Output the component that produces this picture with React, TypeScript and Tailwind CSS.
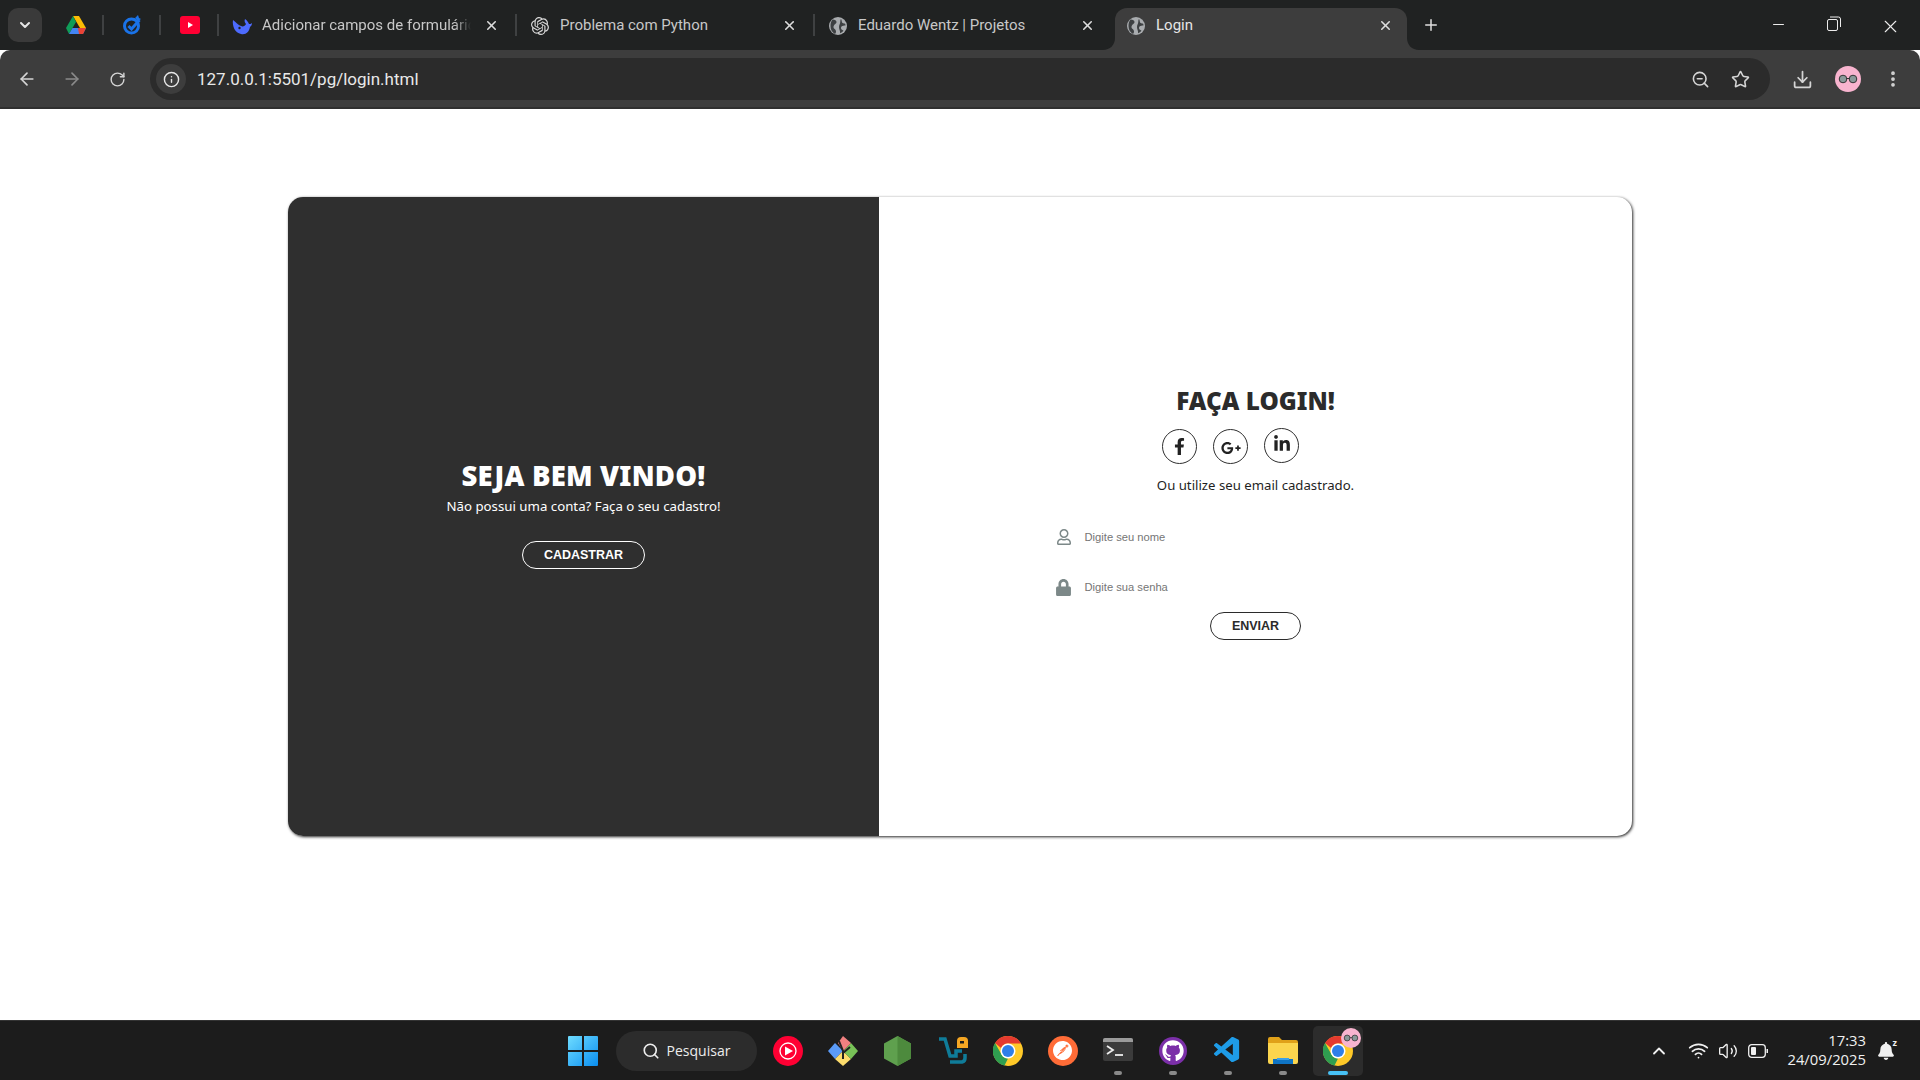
import React from "react";
import { ArrowLeft, ArrowRight, RotateCw, Info, Star, Download, EllipsisVertical, X, Plus, Minus, Search, ChevronDown, ChevronUp, ZoomOut, Wifi, Volume2 } from "lucide-react";
import { FaFacebookF, FaGooglePlusG, FaLinkedinIn, FaRegUser, FaLock, FaGithub, FaBell } from "react-icons/fa";
import { SiOpenai, SiPostman } from "react-icons/si";
import { VscVscode } from "react-icons/vsc";

const Sep = () => <span className="h-[20px] w-[2px] shrink-0 bg-[#3f4142]" />;

const Globe = () => (
  <svg width="18" height="18" viewBox="0 0 18 18" className="shrink-0">
    <circle cx="9" cy="9" r="9" fill="#a9acaf" />
    <path d="M3.500 2.500 C6 2.500 7.500 3.500 7.500 5 C7.500 7 4.500 7.500 4.500 10 C4.500 12 7 12 7 14.500 C7 15.500 6.500 16.500 6 17 C3 15.500 1.500 12.500 1.500 9 C1.500 6.500 2 4.500 3.500 2.500Z" fill="#3d4042" />
    <path d="M12 2 C13 3.500 12.500 5 13.500 6 C14.500 6.800 15.500 6 16.300 7 L16.500 8.500 C15 8.500 13.500 8.500 12.500 9.500 C11.500 10.500 12 12.500 13.500 13 L14.500 13.800 C13.500 15 12.500 15.800 11 16.200 C11.500 14 10 12.500 10 10 C10 7.500 11.300 7 11.300 4.500 C11.300 3.500 11.500 2.500 12 2Z" fill="#3d4042" />
  </svg>
);

const Drive = () => (
  <svg width="20" height="18" viewBox="0 0 20 18">
    <path d="M7 0h6l7 12h-6z" fill="#fbbc04" />
    <path d="M7 0 0 12l3 6 7-12z" fill="#0f9d58" />
    <path d="M3 18h14l3-6H6.500z" fill="#4285f4" />
    <path d="M13 18l-1-6h8l-3 6z" fill="#ea4335" />
  </svg>
);

const Target = () => (
  <svg width="18" height="20" viewBox="0 0 18 20">
    <circle cx="8.500" cy="11" r="7" fill="none" stroke="#1a73e8" strokeWidth="3" />
    <path d="M5.500 11l3 3 8-9" fill="none" stroke="#1a73e8" strokeWidth="3" />
    <path d="M12 3l3-3 1 3 2 1-3 2z" fill="#1a73e8" />
  </svg>
);

const YouTube = () => (
  <svg width="20" height="18" viewBox="0 0 20 18">
    <rect width="20" height="18" y="0" rx="3" fill="#ff0033" />
    <path d="M8 6l5 3-5 3z" fill="#fff" />
  </svg>
);

const Whale = () => (
  <svg width="20" height="18" viewBox="0 0 20 18" className="shrink-0">
    <path d="M1 3c-1 6 2 13 8 14 5 1 8-2 9-7 1-1 2-2 2-4-1 1-2 1-3 1-1-2-2-4-4-5-1 2 0 4 1 5-1 2-3 3-5 2C6 8 4 5 1 3Z" fill="#4d6bfe" />
    <circle cx="7.500" cy="11" r="1.200" fill="#202222" />
  </svg>
);

const Chrome = ({ size = 30 }: { size?: number }) => (
  <svg width={size} height={size} viewBox="0 0 30 30">
    <circle cx="15" cy="15" r="15" fill="#ffc928" />
    <path d="M15 0a15 15 0 0 1 13 7.500H15a7.500 7.500 0 0 0-7 4.500L2 7a15 15 0 0 1 13-7Z" fill="#e53a2f" />
    <path d="M2 7l6.500 11.500a7.500 7.500 0 0 0 6.500 4l-3.500 7A15 15 0 0 1 2 7Z" fill="#2f9e50" />
    <circle cx="15" cy="15" r="7.500" fill="#fff" />
    <circle cx="15" cy="15" r="6" fill="#2f7fe8" />
  </svg>
);

const Avatar = ({ size = 26 }: { size?: number }) => (
  <svg width={size} height={size} viewBox="0 0 26 26">
    <circle cx="13" cy="13" r="13" fill="#f8b4cf" />
    <circle cx="8" cy="13" r="3.800" fill="#8a9899" stroke="#333" />
    <circle cx="18" cy="13" r="3.800" fill="#8a9899" stroke="#333" />
    <path d="M11.500 12.500h3" stroke="#333" />
  </svg>
);

const Tab = ({ icon, title, active, fade }: { icon: React.ReactNode; title: string; active?: boolean; fade?: boolean }) => (
  <div className="relative flex h-[42px] w-[298px] shrink-0 items-center">
    {active ? (
      <>
        <div className="absolute inset-y-0 left-[3px] right-[3px] rounded-t-[12px] bg-[#3d3d3d]" />
        <svg width="12" height="12" viewBox="0 0 12 12" className="absolute bottom-0 -left-[9px] text-[#3d3d3d]">
          <path d="M12 0v12H0c7 0 12-5 12-12Z" fill="currentColor" />
        </svg>
        <svg width="12" height="12" viewBox="0 0 12 12" className="absolute bottom-0 -right-[9px] text-[#3d3d3d]">
          <path d="M0 0v12h12C5 12 0 7 0 0Z" fill="currentColor" />
        </svg>
      </>
    ) : (
      <span className="absolute -left-[1px] top-[6px] h-[22px] w-[2px] bg-[#3f4142]" />
    )}
    <div className="relative flex h-[34px] w-full items-center self-start pt-[1px] pl-[14px] pr-[16px]">
      <span className="flex w-[20px] shrink-0 justify-center">{icon}</span>
      <span className={`ml-[10px] w-[209px] shrink-0 overflow-hidden font-['Roboto',sans-serif] text-[15px] whitespace-nowrap ${fade ? "[mask-image:linear-gradient(to_right,black_92%,transparent)]" : ""} ${active ? "text-[#e6e6e6]" : "text-[#c8c8c8]"}`}>{title}</span>
      <X size={15} strokeWidth={2.500} className="ml-[13px] shrink-0 text-[#dddddd]" />
    </div>
  </div>
);

const Field = ({ icon, label }: { icon: React.ReactNode; label: string }) => (
  <div className="flex h-[30px] w-[410px] items-center pl-[4px]">
    <span className="flex w-[18px] shrink-0 justify-center text-[#7c8888]">{icon}</span>
    <span className="ml-[12px] font-['Liberation_Sans',sans-serif] text-[11.200px] text-[#757575]">{label}</span>
  </div>
);

const Social = ({ children, className = "" }: { children: React.ReactNode; className?: string }) => (
  <span className={`flex h-[35px] w-[35px] items-center justify-center rounded-full border border-[#2f2f2f] text-[#222] ${className}`}>{children}</span>
);

const Slot = ({ children, active, dot }: { children: React.ReactNode; active?: boolean; dot?: boolean }) => (
  <div className={`relative flex h-[50px] w-[50px] items-center justify-center rounded-[5px] ${active ? "bg-[#2c2c2c]" : ""}`}>
    {children}
    {dot && <span className="absolute bottom-[1px] left-[21px] h-[4px] w-[8px] rounded-full bg-[#8a8a8a]" />}
    {active && <span className="absolute bottom-[1px] left-[15px] h-[4px] w-[20px] rounded-full bg-[#47c1f5]" />}
  </div>
);

export default function App() {
  return (
    <div className="flex h-screen w-full flex-col overflow-hidden bg-white font-['Noto_Sans',sans-serif]">
      {/* tab strip */}
      <div className="flex h-[50px] shrink-0 items-end bg-[#202222]">
        <div className="flex h-full w-[47px] shrink-0 items-start pl-[8px] pt-[8px]">
          <span className="flex h-[34px] w-[34px] items-center justify-center rounded-[10px] bg-[#3a3a3a] text-[#e6e6e6]">
            <ChevronDown size={16} strokeWidth={3} />
          </span>
        </div>
        {[<Drive key="d" />, <Target key="t" />, <YouTube key="y" />].map((icon, i) => (
          <div key={i} className="flex h-full w-[57px] shrink-0 items-center justify-between pb-[1px] pl-[19px]">
            {icon}
            {i < 2 && <Sep />}
          </div>
        ))}
        <Tab icon={<Whale />} title="Adicionar campos de formulário" fade />
        <Tab icon={<SiOpenai size={18} className="text-[#d8d8d8]" />} title="Problema com Python" />
        <Tab icon={<Globe />} title="Eduardo Wentz | Projetos" />
        <Tab icon={<Globe />} title="Login" active />
        <Plus size={18} strokeWidth={2} className="mb-[16px] ml-[12px] shrink-0 text-[#e0e0e0]" />
        <div className="flex h-full flex-1 items-start justify-end pt-[16px] text-[#ececec]">
          <span className="flex w-[56px] justify-center"><Minus size={17} strokeWidth={1.500} /></span>
          <span className="flex w-[56px] justify-center">
            <svg width="14" height="15" viewBox="0 0 14 15" fill="none" stroke="currentColor"><rect x=".5" y="3.500" width="10" height="11" rx="1.500" /><path d="M3 1h8.500a2 2 0 0 1 2 2v8" /></svg>
          </span>
          <span className="flex w-[58px] justify-center pr-[2px]"><X size={21} strokeWidth={1.300} /></span>
        </div>
      </div>

      {/* toolbar */}
      <div className="flex h-[59px] shrink-0 flex-col">
        <div className="flex h-[57px] items-center rounded-t-[10px] bg-[#3d3d3d] pl-[17px] pr-[18px] pb-[7px] pt-[8px] text-[#d5d5d5]">
          <ArrowLeft size={20} strokeWidth={2} className="shrink-0" />
          <ArrowRight size={20} strokeWidth={2} className="ml-[25px] shrink-0 text-[#8a8a8a]" />
          <RotateCw size={17} strokeWidth={2} className="ml-[27px] shrink-0" />
          <div className="ml-[24px] flex h-[42px] w-[1620px] shrink-0 items-center rounded-full bg-[#2b2b2b] pl-[6px] pr-[20px]">
            <span className="flex h-[30px] w-[30px] items-center justify-center rounded-full bg-[#3d3d3d]"><Info size={17} className="text-[#e8e8e8]" /></span>
            <span className="ml-[11px] pt-[2px] font-['Roboto',sans-serif] text-[17px] text-[#e8e8e8]">127.0.0.1:5501/pg/login.html</span>
            <span className="flex-1" />
            <ZoomOut size={19} strokeWidth={2} />
            <Star size={19} strokeWidth={2} className="ml-[21px]" />
          </div>
          <Download size={21} strokeWidth={2} className="ml-[22px] shrink-0" />
          <span className="ml-[22px] shrink-0"><Avatar /></span>
          <EllipsisVertical size={20} strokeWidth={2.500} className="ml-[22px] shrink-0" />
        </div>
        <div className="h-[2px] bg-[#2f2f2f]" />
      </div>

      {/* page */}
      <main className="flex flex-1 items-start justify-center pt-[88px]">
        <div className="flex h-[639px] w-[1344px] overflow-hidden rounded-[15px] bg-white shadow-[1px_1px_3px_rgba(0,0,0,0.85)]">
          <section className="flex w-[591px] shrink-0 flex-col items-center bg-[#2f2f2f] pt-[262px] text-white">
            <h1 className="text-[27.500px] leading-[34px] font-black tracking-[0.2px] whitespace-nowrap">SEJA BEM VINDO!</h1>
            <p className="mt-[3px] text-[13.250px] leading-[20px] whitespace-nowrap">Não possui uma conta? Faça o seu cadastro!</p>
            <button className="mt-[25px] flex h-[28px] w-[123px] items-center justify-center rounded-full border border-white font-['Liberation_Sans',sans-serif] text-[12.500px] font-bold">CADASTRAR</button>
          </section>
          <section className="flex flex-1 flex-col items-center pt-[187px]">
            <h1 className="text-[24.300px] leading-[34px] font-black whitespace-nowrap text-[#2b2b2b]">FAÇA LOGIN!</h1>
            <div className="mt-[11px] mr-[50px] flex gap-[16px]">
              <Social><FaFacebookF size={17} /></Social>
              <Social><FaGooglePlusG size={20} className="mt-[2px]" /></Social>
              <Social className="-mt-[1px]"><FaLinkedinIn size={18} className="-mt-[4px]" /></Social>
            </div>
            <p className="mt-[11px] text-[13.200px] leading-[20px] whitespace-nowrap text-[#1f1f1f]">Ou utilize seu email cadastrado.</p>
            <div className="mt-[27px] flex flex-col gap-[20px]">
              <Field icon={<FaRegUser size={16} />} label="Digite seu nome" />
              <Field icon={<FaLock size={17} />} label="Digite sua senha" />
            </div>
            <button className="mt-[10px] flex h-[28px] w-[91px] items-center justify-center rounded-full border border-[#2b2b2b] font-['Liberation_Sans',sans-serif] text-[12.500px] font-bold text-[#2b2b2b]">ENVIAR</button>
          </section>
        </div>
      </main>

      {/* taskbar */}
      <footer className="grid h-[60px] shrink-0 grid-cols-[1fr_auto_1fr] items-center border-t border-[#333] bg-[#1c1c1c]">
        <span />
        <div className="flex items-center gap-[5px]">
          <Slot>
            <svg width="30" height="30" viewBox="0 0 30 30">
              <defs><linearGradient id="w" x1="0" y1="0" x2="1" y2="1"><stop stopColor="#6fdcff" /><stop offset="1" stopColor="#0a8ef0" /></linearGradient></defs>
              <path d="M0 1a1 1 0 0 1 1-1h13v14H0zM16 0h13a1 1 0 0 1 1 1v13H16zM0 16h14v14H1a1 1 0 0 1-1-1zM16 16h14v13a1 1 0 0 1-1 1H16z" fill="url(#w)" />
            </svg>
          </Slot>
          <div className="ml-[3px] mr-[1px] flex h-[40px] w-[141px] items-center justify-center gap-[7px] rounded-full bg-[#2c2c2c] text-[#ededed]">
            <Search size={18} strokeWidth={2.200} />
            <span className="font-['Open_Sans',sans-serif] text-[14px]">Pesquisar</span>
          </div>
          <Slot>
            <svg width="30" height="30" viewBox="0 0 30 30"><circle cx="15" cy="15" r="15" fill="#ff0033" /><circle cx="15" cy="15" r="8" fill="none" stroke="#fff" strokeWidth="1.300" /><path d="M12 10.500l8 4.500-8 4.500z" fill="#fff" /></svg>
          </Slot>
          <Slot>
            <svg width="30" height="30" viewBox="0 0 30 30">
              <path d="M15 15l-8-8-7 8 7 8z" fill="#5b9bf8" />
              <path d="M15 15l-8 8 8 7 8-7z" fill="#fddc6c" />
              <path d="M15 15l8 8 7-8-7-8z" fill="#78c257" />
              <path d="M15 15l-5-8 5-7 8 7z" fill="#f08080" />
              <path d="M11 5l4 10v8M22 11l-7 6" stroke="#222" strokeWidth="2" fill="none" />
            </svg>
          </Slot>
          <Slot>
            <svg width="27" height="30" viewBox="0 0 27 30"><path d="M13.500 0l13.500 7.500v15L13.500 30 0 22.500v-15z" fill="#5fa04e" /><path d="M13.500 0l13.500 7.500v15L13.500 30z" fill="#4d8a3d" /></svg>
          </Slot>
          <Slot>
            <svg width="30" height="30" viewBox="0 0 30 30">
              <path d="M1 3h6l5 17h6v-5h6" fill="none" stroke="#0f7c99" strokeWidth="3.500" />
              <path d="M12 26h12a4 4 0 0 0 3-4v-4" fill="none" stroke="#0f7c99" strokeWidth="3.500" />
              <path d="M19 12V5a4 4 0 0 1 4-4h3a4 4 0 0 1 4 4v7z" fill="#f5a623" /><rect x="22" y="5" width="4" height="2.500" fill="#1c1c1c" />
            </svg>
          </Slot>
          <Slot><Chrome /></Slot>
          <Slot>
            <span className="flex h-[30px] w-[30px] items-center justify-center rounded-full bg-[#ff6c37] text-white"><SiPostman size={19} /></span>
          </Slot>
          <Slot dot>
            <svg width="30" height="23" viewBox="0 0 30 23" className="mb-[2px]"><rect width="30" height="23" rx="2" fill="#3b3b3b" /><path d="M0 2a2 2 0 0 1 2-2h26a2 2 0 0 1 2 2v2H0z" fill="#9b9b9b" /><path d="M4 8l6 4-6 4" fill="none" stroke="#eee" strokeWidth="1.800" /><path d="M12 17h8" stroke="#eee" strokeWidth="1.800" /></svg>
          </Slot>
          <Slot dot>
            <span className="flex h-[28px] w-[28px] items-center justify-center rounded-full bg-[#7b2fa8] text-white"><FaGithub size={22} /></span>
          </Slot>
          <Slot dot><VscVscode size={31} className="text-[#1e9ce8]" /></Slot>
          <Slot dot>
            <svg width="30" height="27" viewBox="0 0 30 27"><path d="M0 2a2 2 0 0 1 2-2h9l3 3h14a2 2 0 0 1 2 2v4H0z" fill="#e0a119" /><path d="M0 6h30v19a2 2 0 0 1-2 2H2a2 2 0 0 1-2-2z" fill="#fbd54e" /><path d="M5 22h20v5H5z" fill="#0f74c4" /><rect x="9" y="21" width="12" height="2" fill="#3aa0e8" /></svg>
          </Slot>
          <Slot active>
            <Chrome />
            <span className="absolute right-[2px] top-[2px]"><Avatar size={20} /></span>
          </Slot>
        </div>
        <div className="flex items-center justify-end text-[#f0f0f0]">
          <ChevronUp size={20} strokeWidth={2.200} />
          <Wifi size={21} strokeWidth={2} className="ml-[19px]" />
          <Volume2 size={20} strokeWidth={1.600} className="ml-[9px]" />
          <svg width="20" height="14" viewBox="0 0 20 14" fill="none" className="ml-[10px]"><rect x=".7" y=".7" width="16.600" height="12.600" rx="3" stroke="currentColor" strokeWidth="1.300" /><rect x="3" y="3" width="5" height="8" rx="1" fill="currentColor" /><rect x="18.500" y="5" width="1.500" height="4" fill="currentColor" /></svg>
          <div className="mb-[2px] ml-[19px] flex flex-col items-end font-['Open_Sans',sans-serif] text-[14.800px] leading-[19px]">
            <span>17:33</span>
            <span>24/09/2025</span>
          </div>
          <span className="relative ml-[10px] mr-[25px] flex h-[20px] w-[19px] items-center justify-center">
            <FaBell size={18} />
            <span className="absolute -right-[2px] -top-[3px] font-['Noto_Sans',sans-serif] text-[9px] leading-[9px] font-bold">z</span>
          </span>
        </div>
      </footer>
    </div>
  );
}
